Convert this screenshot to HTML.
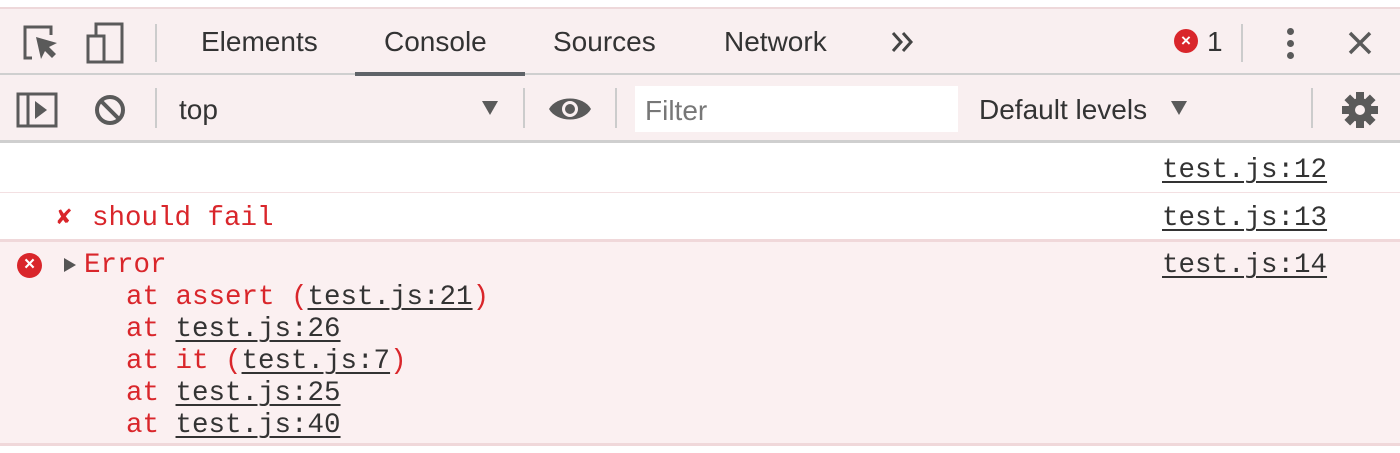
<!DOCTYPE html>
<html><head><meta charset="utf-8"><style>
*{margin:0;padding:0;box-sizing:border-box}
body{width:1400px;height:453px;background:#fff;position:relative;overflow:hidden;font-family:"Liberation Sans",sans-serif}
.a{position:absolute}
.tb{background:#f9eff0}
.t{position:absolute;font-size:28px;color:#333;top:26px}
.m{position:absolute;font-family:"Liberation Mono",monospace;font-size:27.5px;white-space:pre;line-height:32px}
.r{color:#d9262b}
.u{color:#333;text-decoration:underline;text-underline-offset:4px;text-decoration-thickness:2px}
.sep{position:absolute;width:2px;background:#ccc}
</style></head><body>
<div class="a" style="left:0;top:7px;width:1400px;height:2px;background:#eed8da"></div>
<div class="a tb" style="left:0;top:9px;width:1400px;height:64px"></div>
<div class="a" style="left:0;top:73px;width:1400px;height:2px;background:#cfcfcf"></div>
<div class="a tb" style="left:0;top:75px;width:1400px;height:65px"></div>
<div class="a" style="left:0;top:140px;width:1400px;height:3px;background:#cfcfcf"></div>

<svg class="a" style="left:22px;top:24px" width="40" height="40" viewBox="0 0 40 40"><path d="M10 34H3V3h26v8" fill="none" stroke="#5a5a5a" stroke-width="3"/><path d="M14 13l5 22 4-8 7 7 4-4-7-7 8-4z" fill="#5a5a5a"/></svg>
<svg class="a" style="left:86px;top:22px" width="40" height="42" viewBox="0 0 40 42"><rect x="10" y="2" width="26" height="38" fill="none" stroke="#5a5a5a" stroke-width="3"/><rect x="2" y="14" width="16" height="26" fill="#f9eff0" stroke="#5a5a5a" stroke-width="3"/></svg>
<div class="sep" style="left:155px;top:24px;height:38px"></div>
<div class="t" style="left:201px">Elements</div>
<div class="t" style="left:384px">Console</div>
<div class="a" style="left:355px;top:72px;width:170px;height:4px;background:#5f6368"></div>
<div class="t" style="left:553px">Sources</div>
<div class="t" style="left:724px">Network</div>
<svg class="a" style="left:891px;top:31px" width="24" height="22" viewBox="0 0 24 22"><path d="M2 2l8 9-8 9M12 2l8 9-8 9" fill="none" stroke="#444" stroke-width="3"/></svg>
<div class="a" style="left:1174px;top:29px;width:24px;height:24px;border-radius:50%;background:#d9262b;color:#fff;font-size:17px;font-weight:bold;text-align:center;line-height:23px">×</div>
<div class="t" style="left:1207px">1</div>
<div class="sep" style="left:1241px;top:24px;height:38px"></div>
<div class="a" style="left:1287px;top:28px;width:7px;height:7px;border-radius:50%;background:#5a5a5a;box-shadow:0 12px 0 #5a5a5a,0 24px 0 #5a5a5a"></div>
<svg class="a" style="left:1347px;top:30px" width="26" height="26" viewBox="0 0 26 26"><path d="M3 3L23 23M23 3L3 23" stroke="#5a5a5a" stroke-width="3.5"/></svg>

<svg class="a" style="left:16px;top:92px" width="42" height="36" viewBox="0 0 42 36"><rect x="2" y="2" width="38" height="32" fill="none" stroke="#5a5a5a" stroke-width="3"/><path d="M12 2v32" stroke="#5a5a5a" stroke-width="3"/><path d="M19 9l12 9-12 9z" fill="#5a5a5a"/></svg>
<svg class="a" style="left:93px;top:93px" width="34" height="34" viewBox="0 0 34 34"><circle cx="17" cy="17" r="13" fill="none" stroke="#5a5a5a" stroke-width="4"/><path d="M8 8l18 18" stroke="#5a5a5a" stroke-width="4"/></svg>
<div class="sep" style="left:155px;top:88px;height:40px"></div>
<div class="t" style="left:179px;top:94px">top</div>
<div class="a" style="left:482px;top:101px;width:0;height:0;border-left:8px solid transparent;border-right:8px solid transparent;border-top:14px solid #5a5a5a"></div>
<div class="sep" style="left:523px;top:88px;height:40px"></div>
<svg class="a" style="left:548px;top:93px" width="44" height="32" viewBox="0 0 44 32"><path d="M1 16C9 2 35 2 43 16 35 30 9 30 1 16z" fill="#5a5a5a"/><circle cx="22" cy="16" r="8" fill="#f9eff0"/><circle cx="22" cy="16" r="5" fill="#5a5a5a"/></svg>
<div class="sep" style="left:615px;top:88px;height:40px"></div>
<div class="a" style="left:635px;top:86px;width:323px;height:46px;background:#fff"></div>
<div class="t" style="left:645px;top:95px;color:#777">Filter</div>
<div class="t" style="left:979px;top:94px">Default levels</div>
<div class="a" style="left:1171px;top:101px;width:0;height:0;border-left:8px solid transparent;border-right:8px solid transparent;border-top:14px solid #5a5a5a"></div>
<div class="sep" style="left:1311px;top:88px;height:40px"></div>
<svg class="a" style="left:1341px;top:91px" width="38" height="38" viewBox="0 0 38 38"><g fill="#5a5a5a"><circle cx="19" cy="19" r="12"/><rect x="15" y="1" width="8" height="36"/><rect x="15" y="1" width="8" height="36" transform="rotate(45 19 19)"/><rect x="15" y="1" width="8" height="36" transform="rotate(90 19 19)"/><rect x="15" y="1" width="8" height="36" transform="rotate(135 19 19)"/></g><circle cx="19" cy="19" r="5" fill="#f9eff0"/></svg>

<div class="a" style="left:0;top:192px;width:1400px;height:1px;background:#f3e0e2"></div>
<div class="a" style="left:0;top:239px;width:1400px;height:3px;background:#f0d8da"></div>
<div class="a" style="left:0;top:242px;width:1400px;height:202px;background:#fbf0f1"></div>
<div class="a" style="left:0;top:443px;width:1400px;height:3px;background:#f0d8da"></div>

<div class="m u" style="left:1162px;top:155px">test.js:12</div>
<div class="m r" style="left:57px;top:203px;font-weight:bold;font-size:24px">✘</div>
<div class="m r" style="left:92px;top:203px">should fail</div>
<div class="m u" style="left:1162px;top:203px">test.js:13</div>

<div class="a" style="left:17px;top:253px;width:25px;height:25px;border-radius:50%;background:#d9262b;color:#fff;font-size:19px;font-weight:bold;text-align:center;line-height:24px">×</div>
<div class="a" style="left:64px;top:258px;width:0;height:0;border-top:7px solid transparent;border-bottom:7px solid transparent;border-left:12px solid #555"></div>
<div class="m r" style="left:84px;top:250px">Error</div>
<div class="m u" style="left:1162px;top:250px">test.js:14</div>
<div class="m r" style="left:126px;top:282px">at assert (<span class="u">test.js:21</span>)
at <span class="u">test.js:26</span>
at it (<span class="u">test.js:7</span>)
at <span class="u">test.js:25</span>
at <span class="u">test.js:40</span></div>
</body></html>
